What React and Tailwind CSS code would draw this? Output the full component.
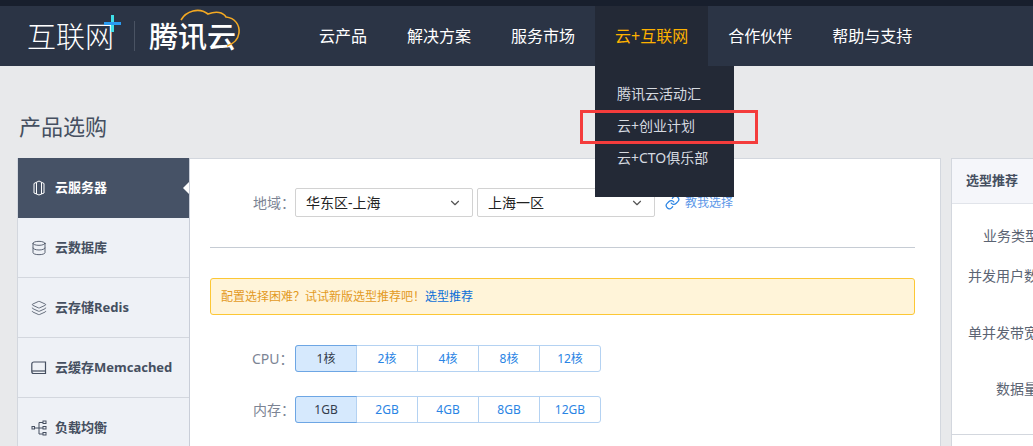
import React from 'react'
import { ChevronDown, Database, Layers, Link as LinkIcon } from 'lucide-react'

const font = { fontFamily: '"Noto Sans", "Noto Sans CJK SC", sans-serif' }

const navItems = ['云产品', '解决方案', '服务市场', '云+互联网', '合作伙伴', '帮助与支持']

const BoxIcon = () => (
    <svg width="16" height="16" viewBox="0 0 16 16" fill="none" stroke="currentColor" strokeWidth="1">
        <path d="M3 3.5 L8 1 L13 3.5 V13 L8 15 L3 13 Z" />
        <path d="M5.5 2.5 V14 M10.5 2.5 V14" />
    </svg>
)

const DiskIcon = () => (
    <svg width="16" height="14" viewBox="0 0 16 14" fill="none" stroke="currentColor" strokeWidth="1.2">
        <path d="M3 1 H14.5 V12.5 H2.5 C1.2 12.5 .8 11.5 .8 10.5 V3 C.8 2 1.5 1 3 1 Z" />
        <path d="M.8 10 H14.5" />
    </svg>
)

const TreeIcon = () => (
    <svg width="16" height="16" viewBox="0 0 16 16" fill="none" stroke="currentColor" strokeWidth="1">
        <rect x="1" y="6.5" width="2.5" height="2.5" />
        <rect x="12" y="1" width="3" height="2.5" />
        <rect x="12" y="6.5" width="3" height="2.5" />
        <rect x="12" y="12.5" width="3" height="2.5" />
        <path d="M4 8 H12 M8 2.5 H12 M8 2.5 V14 H12" />
    </svg>
)

const sideItems = [
    { name: '云服务器', icon: <BoxIcon />, active: true },
    { name: '云数据库', icon: <Database size={16} strokeWidth={1.3} /> },
    { name: '云存储Redis', icon: <Layers size={16} strokeWidth={1.2} /> },
    { name: '云缓存Memcached', icon: <DiskIcon /> },
    { name: '负载均衡', icon: <TreeIcon /> },
]

const Logo = () => (
    <div className="flex items-center w-[299px] pl-[27px] shrink-0">
        <div className="relative text-[29px] leading-none text-white font-light tracking-[0px] w-[87px] whitespace-nowrap">
            互联网
            <span className="absolute left-[77px] top-[-7px] w-[17px] h-[17px]">
                <span className="absolute left-[7px] top-0 w-[3px] h-[17px] bg-[#3fe0e8]"></span>
                <span className="absolute left-0 top-[7px] w-[17px] h-[3px] bg-[#2a9bf0]"></span>
            </span>
        </div>
        <div className="ml-[20px] w-px h-[30px] bg-[#4a5363]"></div>
        <div className="relative ml-[14px] text-[29px] leading-none text-white font-medium whitespace-nowrap">
            腾讯云
            <svg className="absolute left-[28px] top-[-14px]" width="66" height="42" viewBox="0 0 66 42" fill="none">
                <path d="M4 12 C9 3 22 -1 31 6 C39 3 46 4 49 9 C58 10 63 17 62 25 C61 32 56 36 50 38" stroke="#f4a922" strokeWidth="1.6" />
            </svg>
        </div>
    </div>
)

const ButtonGroup = ({ items }) => (
    <div className="flex w-[306px] h-[27px] rounded-[3px] border border-[#b4d2f2] text-[12px]">
        {items.map((item, i) => (
            <div
                key={item}
                className={`flex-1 flex items-center justify-center ${i === 0 ? 'bg-[#d6e9fd] text-[#333c4c] -m-px border border-[#6da6e4] rounded-l-[3px]' : 'text-[#2a84e4] border-l border-[#b4d2f2]'}`}
            >
                {item}
            </div>
        ))}
    </div>
)

const Select = ({ value }) => (
    <div className="flex items-center justify-between w-[178px] h-[29px] px-[10px] bg-white border border-[#d2d2d2] rounded-[2px] text-[14px] leading-none text-[#222]">
        <span>{value}</span>
        <ChevronDown size={14} className="text-[#555]" />
    </div>
)

const App = () => {
    return (
        <div style={font} className="relative w-[1033px] h-[446px] overflow-hidden bg-[#e8e9eb]">
            <div className="h-[6px] bg-[#181f2d]"></div>
            <header className="flex h-[60px] bg-[#2b3445]">
                <Logo />
                <nav className="flex">
                    {navItems.map((item, i) => (
                        <div
                            key={item}
                            className={`flex items-center px-5 text-[16px] whitespace-nowrap ${i === 3 ? 'bg-[#232936] text-[#fdb100]' : 'text-white'}`}
                        >
                            {item}
                        </div>
                    ))}
                </nav>
            </header>

            <h1 className="pl-[19px] pt-[46px] text-[22px] leading-[28px] font-normal text-[#454f60]">产品选购</h1>

            <div className="flex mt-[18px] pl-[17px] gap-[10px]">
                <aside className="w-[173px] shrink-0 border-r border-[#c9ced8] border-l border-l-[#d3d7de] text-[13px] font-bold">
                    {sideItems.map(item => (
                        <div
                            key={item.name}
                            className={`relative flex items-center h-[60px] pl-[13px] gap-[8px] ${item.active ? 'bg-[#465266] text-white' : 'bg-[#eef1f6] text-[#454f60] border-b border-[#d3d7de]'}`}
                        >
                            <span className="w-[16px] flex justify-center">{item.icon}</span>
                            <span className="whitespace-nowrap">{item.name}</span>
                            {item.active && (
                                <span className="absolute right-0 top-[24px] border-y-[6px] border-y-transparent border-r-[6px] border-r-white"></span>
                            )}
                        </div>
                    ))}
                </aside>

                <main className="w-[751px] shrink-0 h-[300px] bg-white border-y border-r border-[#d3d7de] -ml-[10px] mr-0 pl-[20px] pr-[25px] pt-[29px] text-[14px]">
                    <div className="flex items-center h-[29px]">
                        <span className="w-[85px] pl-[43px] text-[#7c8494] whitespace-nowrap">地域：</span>
                        <Select value="华东区-上海" />
                        <span className="w-1"></span>
                        <Select value="上海一区" />
                        <span className="flex items-center ml-[10px] gap-[5px] text-[12px] text-[#5c97e8] whitespace-nowrap">
                            <LinkIcon size={15} className="text-[#2a84e4]" />
                            教我选择
                        </span>
                    </div>
                    <div className="mt-[30px] h-px bg-[#c6ccd4]"></div>
                    <div className="flex items-center mt-[30px] h-[37px] pl-[10px] rounded-[3px] border border-[#fcc735] bg-[#fff4d9] text-[12px] text-[#e39a1f]">
                        配置选择困难？试试新版选型推荐吧！<span className="text-[#0b6fd8]">选型推荐</span>
                    </div>
                    <div className="flex items-center mt-[30px]">
                        <span className="w-[85px] pl-[42px] text-[#7c8494] whitespace-nowrap">CPU：</span>
                        <ButtonGroup items={['1核', '2核', '4核', '8核', '12核']} />
                    </div>
                    <div className="flex items-center mt-[24px]">
                        <span className="w-[85px] pl-[43px] text-[#7c8494] whitespace-nowrap">内存：</span>
                        <ButtonGroup items={['1GB', '2GB', '4GB', '8GB', '12GB']} />
                    </div>
                </main>

                <section className="w-[300px] shrink-0 h-[300px] bg-white border border-[#d3d7de]">
                    <div className="flex items-center h-[45px] pl-[14px] bg-[#f5f6fa] border-b border-[#e1e4ea] text-[13px] font-bold text-[#454f60]">选型推荐</div>
                    <div className="h-[231px] border-b border-[#d3d7de] text-[14px] text-[#5b6473] relative">
                        <div className="absolute left-[31px] top-[21px] whitespace-nowrap">业务类型</div>
                        <div className="absolute left-[16px] top-[61px] whitespace-nowrap">并发用户数</div>
                        <div className="absolute left-[16px] top-[118px] whitespace-nowrap">单并发带宽</div>
                        <div className="absolute left-[44px] top-[174px] whitespace-nowrap">数据量</div>
                    </div>
                </section>
            </div>

            <div className="absolute left-[595px] top-[66px] w-[139px] h-[131px] pt-[11px] bg-[#232936] text-[14px] text-[#d6dae0]">
                {['腾讯云活动汇', '云+创业计划', '云+CTO俱乐部'].map(item => (
                    <div key={item} className="flex items-center h-[32px] pl-[22px] whitespace-nowrap">{item}</div>
                ))}
            </div>
            <div className="absolute left-[580px] top-[110px] w-[178px] h-[34px] border-[3px] border-[#f43c3c]"></div>
        </div>
    )
}

export default App
